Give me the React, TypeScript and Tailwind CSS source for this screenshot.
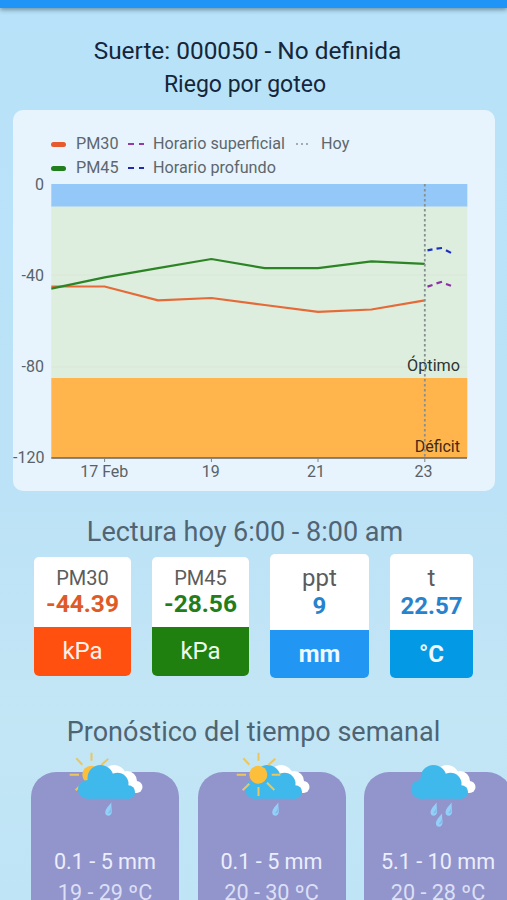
const legend = "flex items-center text-[16.2px] leading-6 text-[#5d676d]";

function Chart() {
    return (
        <svg className="block overflow-visible" width="482" height="307" viewBox="13 184 482 307" fontFamily="Roboto, sans-serif" fontSize="16">
            <rect x="51.3" y="184" width="416" height="23" fill="#94c8f8" />
            <rect x="51.3" y="206.5" width="416" height="172" fill="#ddeede" />
            <rect x="51.3" y="378" width="416" height="80" fill="#ffb54c" />
            <path d="M51.3 275H467M51.3 367H467" stroke="#dbe6d8" strokeWidth="1" />
            <path d="M51.3 458H467" stroke="#6b6458" strokeWidth="1.3" />
            <path d="M104.6 458v4M211.4 458v4M318 458v4M424.8 458v4" stroke="#7d858a" strokeWidth="1" />
            <polyline points="51.3,286.5 104.6,286.5 158,300.3 211.4,298 264.7,305 318,311.8 371.4,309.5 424.8,300.3" fill="none" stroke="#e56a37" strokeWidth="2.2" />
            <polyline points="51.3,288.7 104.6,277.3 158,268.2 211.4,259 264.7,268.2 318,268.2 371.4,261.4 424.8,263.8" fill="none" stroke="#2c8425" strokeWidth="2.2" />
            <path d="M427.5 250.4l5-1M436.5 248.6l5.5-.6M446 250.2l5 2.7" stroke="#1c2fc0" strokeWidth="2.2" />
            <path d="M427.5 286.6l5-1.6M436.5 283.4l5.5-1.6M446 284l5 1.8" stroke="#8e2fa5" strokeWidth="2.2" />
            <g fill="#2d3432" textAnchor="end">
                <text x="460" y="371" fontSize="16.2">Óptimo</text>
                <text x="460" y="452" fill="#3d2b18">Déficit</text>
            </g>
            <path d="M424.8 184V458" stroke="#85908f" strokeWidth="1.8" strokeDasharray="2.4 2.6" />
            <g fill="#596268" textAnchor="end">
                <text x="44" y="190">0</text>
                <text x="44" y="281">-40</text>
                <text x="44" y="372">-80</text>
                <text x="44.5" y="463">-120</text>
            </g>
            <g fill="#596268" textAnchor="middle">
                <text x="104.3" y="476.5">17 Feb</text>
                <text x="210.8" y="476.5">19</text>
                <text x="316" y="476.5">21</text>
                <text x="423.5" y="476.5">23</text>
            </g>
        </svg>
    );
}

function Sun() {
    return (
        <g>
            <path d="M21.500 1.700v8M6.300 7.300l6 6.400M38.300 7.700l-7 6.300M-.3 23.700h9.300M34.700 23.700h8.600M5.700 39.300l6.600-6.600M37.300 39l-7.300-7.300M21.500 36v9" stroke="#ecc65d" strokeWidth="2" />
            <circle cx="21.300" cy="23.700" r="9" fill="#fbbf3b" />
        </g>
    );
}

function Drop({ x, y }: { x: number; y: number }) {
    return (
        <g transform={`translate(${x} ${y})`}>
            <path d="M6.400 0C3.600 3.400 .4 6.400 .2 9.400C.1 14.400 6.400 14.600 6.800 9.600C7 6.600 6 3.600 6.400 0Z" fill="#94cff8" />
            <path d="M5.900 4.500C5.600 7 4.800 8.400 3 10.500C4.600 11.400 6.100 10.400 6.200 8.600Z" fill="#7dbcee" />
        </g>
    );
}

function WeatherIcon({ sun, drops }: { sun?: "back" | "front"; drops: number }) {
    return (
        <svg className="block overflow-visible" width="76" height="76" viewBox="0 0 76 76">
            <g fill="#fff">
                <circle cx="44" cy="26" r="12" />
                <circle cx="57" cy="30" r="10" />
                <circle cx="66.500" cy="36" r="6" />
                <path d="M44 30h22v12H44z" />
            </g>
            {sun === "back" && <Sun />}
            <g fill="#3fb9eb">
                <circle cx="30.500" cy="27" r="13" />
                <circle cx="47.500" cy="32.700" r="11" />
                <circle cx="17.300" cy="38.300" r="9.400" />
                <circle cx="58.300" cy="41" r="6.800" />
                <path d="M17 30h38v12h4v5.800H17z" />
            </g>
            {sun === "front" && <Sun />}
            {drops === 1 && <Drop x={35} y={51.5} />}
            {drops === 3 && (
                <g>
                    <Drop x={27.3} y={51.5} />
                    <Drop x={42.3} y={51.5} />
                    <Drop x={32.7} y={62.5} />
                </g>
            )}
        </svg>
    );
}

export default function App() {
    return (
        <div className="h-[900px] w-[507px] overflow-hidden bg-[linear-gradient(180deg,#b8e2f9_0%,#bce2f7_55%,#c3e6f5_80%,#bee4f6_100%)] font-['Roboto',sans-serif]">
            <div className="h-2 bg-[#2094f7] shadow-[0_2px_4px_rgba(40,70,85,0.5)]"></div>

            <div className="flex h-[102px] flex-col items-center pt-[27px] text-[#15263a]">
                <h1 className="mr-3 text-[24.4px] leading-8">Suerte: 000050 - No definida</h1>
                <h2 className="mr-[17px] pt-0.5 text-[23px] leading-8">Riego por goteo</h2>
            </div>

            <div className="ml-[13px] h-[381px] w-[482px] rounded-[10px] bg-[#e7f4fd] pt-[22px]">
                <div className="flex h-[52px] pl-[38px]">
                    <div className="w-[77px]">
                        <div className={legend}>
                            <span className="mr-2.5 h-[5px] w-[15px] rounded-full bg-[#e75a30]"></span>PM30
                        </div>
                        <div className={legend}>
                            <span className="mr-2.5 h-[5px] w-[15px] rounded-full bg-[#207f1c]"></span>PM45
                        </div>
                    </div>
                    <div className="w-[168px]">
                        <div className={legend}>
                            <span className="mr-[9px] flex gap-[5px]">
                                <i className="h-0.5 w-[5.5px] bg-[#923aa5]"></i>
                                <i className="h-0.5 w-[5.5px] bg-[#923aa5]"></i>
                            </span>
                            Horario superficial
                        </div>
                        <div className={legend}>
                            <span className="mr-[9px] flex gap-[5px]">
                                <i className="h-0.5 w-[5.5px] bg-[#2229ae]"></i>
                                <i className="h-0.5 w-[5.5px] bg-[#2229ae]"></i>
                            </span>
                            Horario profundo
                        </div>
                    </div>
                    <div className={legend + " h-6"}>
                        <span className="mr-[13px] flex gap-[3px]">
                            <i className="size-0.5 bg-[#a3abb0]"></i>
                            <i className="size-0.5 bg-[#a3abb0]"></i>
                            <i className="size-0.5 bg-[#a3abb0]"></i>
                        </span>
                        Hoy
                    </div>
                </div>
                <Chart />
            </div>

            <h2 className="mr-[17px] pt-6 text-center text-[27px] leading-[34px] text-[#516473]">Lectura hoy 6:00 - 8:00 am</h2>

            <div className="flex h-[165px] items-start pt-[5px] pl-[34px]">
                <div className="mt-[3px] mr-[21px] w-[97px] overflow-hidden rounded-[5px] bg-white text-center">
                    <div className="h-[70px] pt-[9px]">
                        <p className="text-[20px] leading-[25px] text-[#5c5c5c]">PM30</p>
                        <p className="text-[24.5px] leading-[25px] font-bold text-[#df5a27]">-44.39</p>
                    </div>
                    <div className="h-[49px] bg-[#ff500f] text-[24px] leading-[49px] text-[#fff2eb]">kPa</div>
                </div>
                <div className="mt-[3px] mr-[21px] w-[97px] overflow-hidden rounded-[5px] bg-white text-center">
                    <div className="h-[70px] pt-[9px]">
                        <p className="text-[20px] leading-[25px] text-[#5c5c5c]">PM45</p>
                        <p className="text-[24.5px] leading-[25px] font-bold text-[#237d1b]">-28.56</p>
                    </div>
                    <div className="h-[49px] bg-[#20800f] text-[24px] leading-[49px] text-[#edfbed]">kPa</div>
                </div>
                <div className="mr-[21px] w-[99px] overflow-hidden rounded-[5px] bg-white text-center">
                    <div className="h-[76px] pt-[11px]">
                        <p className="text-[24px] leading-[27px] text-[#5c5c5c]">ppt</p>
                        <p className="text-[24px] leading-[28px] font-bold text-[#2783cd]">9</p>
                    </div>
                    <div className="h-12 bg-[#2296f3] text-[24px] leading-[48px] font-bold text-[#eff9ff]">mm</div>
                </div>
                <div className="w-[83px] overflow-hidden rounded-[5px] bg-white text-center">
                    <div className="h-[76px] pt-[11px]">
                        <p className="text-[24px] leading-[27px] text-[#5c5c5c]">t</p>
                        <p className="text-[24px] leading-[28px] font-bold text-[#2783cd]">22.57</p>
                    </div>
                    <div className="h-12 bg-[#0399e5] text-[24px] leading-[48px] font-bold text-[#eff9ff]">°C</div>
                </div>
            </div>

            <h2 className="pt-px text-center text-[27px] leading-[34px] text-[#4e6473]">Pronóstico del tiempo semanal</h2>

            <div className="flex gap-[18.5px] pt-[23px] pl-[31px]">
                <div className="h-[130px] w-[148px] shrink-0 rounded-t-[25px] bg-[#9295cc] text-center text-[#eceefd]">
                    <div className="-mt-[21px] flex h-[95px] pl-[39px]">
                        <WeatherIcon sun="back" drops={1} />
                    </div>
                    <p className="text-[21.6px] leading-[31px]">0.1 - 5 mm</p>
                    <p className="text-[21.6px] leading-[32px] text-[#dcdff5]">19 - 29 ºC</p>
                </div>
                <div className="h-[130px] w-[148px] shrink-0 rounded-t-[25px] bg-[#9295cc] text-center text-[#eceefd]">
                    <div className="-mt-[21px] flex h-[95px] pl-[39px]">
                        <WeatherIcon sun="front" drops={1} />
                    </div>
                    <p className="text-[21.6px] leading-[31px]">0.1 - 5 mm</p>
                    <p className="text-[21.6px] leading-[32px] text-[#dcdff5]">20 - 30 ºC</p>
                </div>
                <div className="h-[130px] w-[148px] shrink-0 rounded-t-[25px] bg-[#9295cc] text-center text-[#eceefd]">
                    <div className="-mt-[21px] flex h-[95px] pl-[39px]">
                        <WeatherIcon drops={3} />
                    </div>
                    <p className="text-[21.6px] leading-[31px]">5.1 - 10 mm</p>
                    <p className="text-[21.6px] leading-[32px] text-[#dcdff5]">20 - 28 ºC</p>
                </div>
            </div>
        </div>
    );
}
